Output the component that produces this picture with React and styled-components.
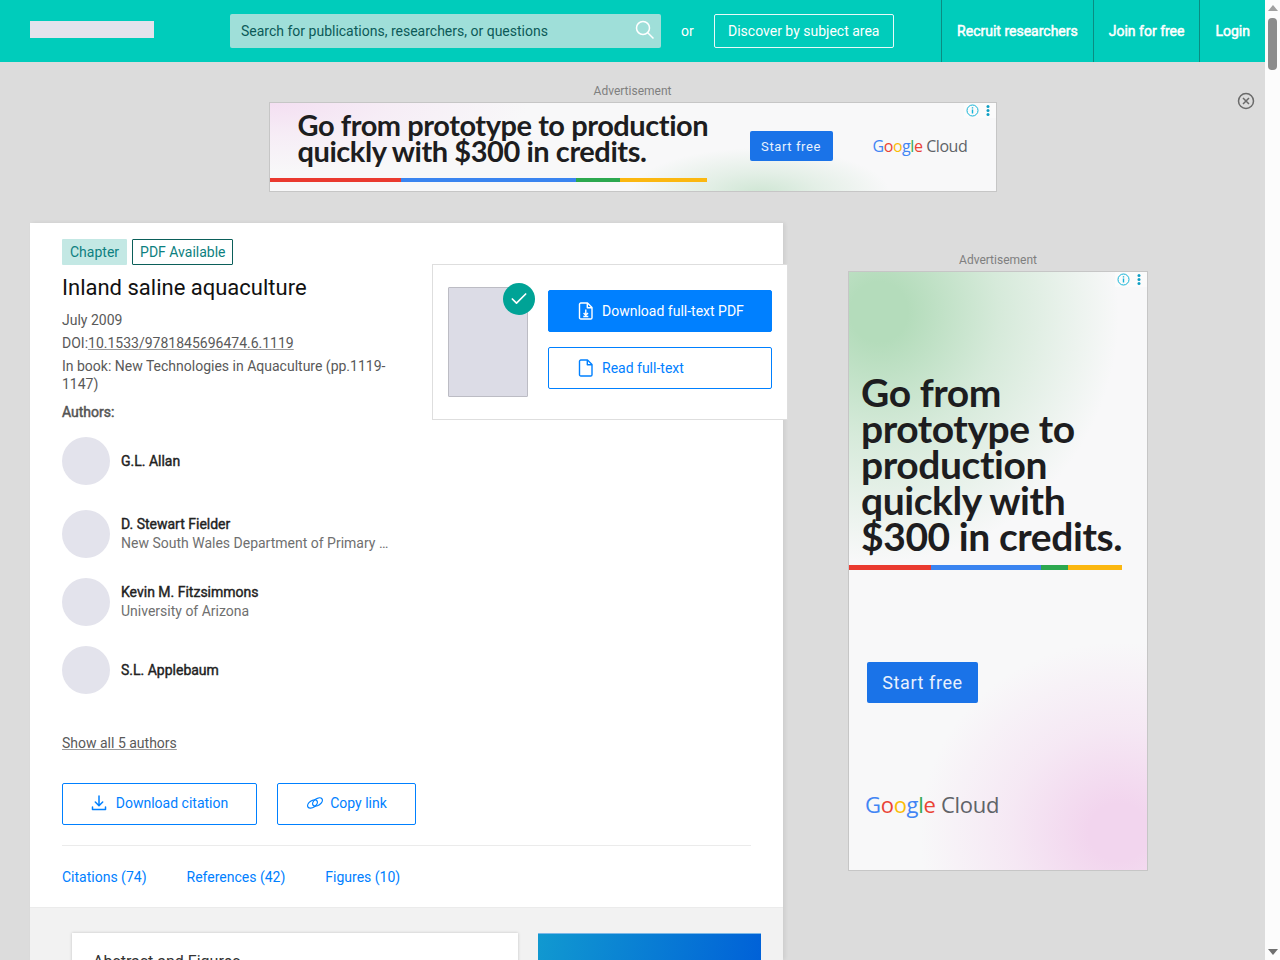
import React from "react";
import styled, { createGlobalStyle } from "styled-components";
import { Check } from "lucide-react";

const Global = createGlobalStyle`
  html, body {
    margin: 0;
    height: 960px;
    overflow: hidden;
    background: #dcdcdc;
    font-family: Roboto, "Liberation Sans", sans-serif;
  }
  * { box-sizing: border-box; }
`;

const Shell = styled.div`
  display: flex;
  width: 1280px;
  height: 960px;
  overflow: hidden;
`;

const Page = styled.div`
  position: relative;
  width: 1265px;
  flex: none;
  background: #dcdcdc;
`;

const Scrollbar = styled.div`
  width: 15px;
  flex: none;
  background: #fcfcfc;
  display: flex;
  flex-direction: column;
  align-items: center;
  justify-content: space-between;
  position: relative;
`;

const ScrollArrow = styled.div`
  width: 0;
  height: 0;
  margin: 5px 0;
  border-left: 5px solid transparent;
  border-right: 5px solid transparent;
  ${(p) => (p.$down ? "border-top: 6px solid #707070;" : "border-bottom: 6px solid #a0a0a0;")}
`;

const ScrollThumb = styled.div`
  position: absolute;
  top: 18px;
  left: 3px;
  width: 9px;
  height: 52px;
  border-radius: 4px;
  background: #8c8c8c;
`;

/* header */
const Header = styled.header`
  height: 62px;
  background: #00ccbb;
  display: flex;
  align-items: stretch;
  padding-left: 30px;
`;

const Logo = styled.div`
  width: 124px;
  height: 17px;
  background: #e3e3ec;
  align-self: center;
  margin: 0 76px 4px 0;
`;

const Search = styled.div`
  width: 431px;
  height: 34px;
  margin-top: 14px;
  background: #9fdfd9;
  border-radius: 2px;
  display: flex;
  align-items: center;
  justify-content: space-between;
  padding: 0 6px 0 11px;
  font-size: 14px;
  color: #0c5a58;
  svg { margin-bottom: 3px; }
`;

const Or = styled.span`
  align-self: center;
  color: #fff;
  font-size: 14px;
  margin: 0 20px;
`;

const Discover = styled.div`
  width: 180px;
  height: 34px;
  margin-top: 14px;
  border: 1px solid #e8faf8;
  border-radius: 2px;
  color: #fff;
  font-size: 14px;
  display: flex;
  align-items: center;
  justify-content: center;
`;

const Nav = styled.nav`
  margin-left: auto;
  display: flex;
`;

const NavItem = styled.a`
  display: flex;
  align-items: center;
  padding: 0 15px;
  border-left: 1px solid #0a8c82;
  color: #fff;
  font-size: 14px;
  -webkit-text-stroke: 0.5px #fff;
`;

/* ads */
const TopAd = styled.section`
  display: flex;
  flex-direction: column;
  align-items: center;
  padding-top: 22px;
  height: 161px;
`;

const AdLabel = styled.div`
  font-size: 12px;
  line-height: 14px;
  height: 18px;
  color: #7f7f7f;
  text-align: center;
`;

const Banner = styled.div`
  position: relative;
  width: 728px;
  height: 90px;
  border: 1px solid #c6c6c6;
  background:
    radial-gradient(ellipse 130px 45px at 490px 90px, #cfe6d4 0%, rgba(207, 230, 212, 0.5) 45%, rgba(207, 230, 212, 0) 100%),
    radial-gradient(ellipse 260px 70px at 0 0, #f4dff2 0%, rgba(244, 223, 242, 0.45) 45%, rgba(244, 223, 242, 0) 100%),
    #f8f8f9;
  display: flex;
  align-items: center;
  padding-bottom: 2px;
`;

const BannerCopy = styled.div`
  width: 450px;
  padding-left: 28px;
  margin-top: -17px;
  font-family: Lato, sans-serif;
  font-weight: 700;
  font-size: 29px;
  line-height: 26px;
  letter-spacing: -0.45px;
  color: #1d1d20;
  white-space: nowrap;
`;

const StartFree = styled.div`
  width: ${(p) => (p.$large ? 111 : 83)}px;
  height: ${(p) => (p.$large ? 41 : 30)}px;
  background: #1a73e8;
  border-radius: 2px;
  color: #e8f1fd;
  font-size: ${(p) => (p.$large ? 18 : 13)}px;
  letter-spacing: 0.6px;
  display: flex;
  align-items: center;
  justify-content: center;
`;

const BannerCta = styled.div`
  margin-left: 30px;
`;

const BannerLogo = styled.div`
  margin-left: 40px;
`;

const GoogleCloud = styled.div`
  font-family: "Open Sans", sans-serif;
  font-size: ${(p) => (p.$large ? 22 : 16)}px;
  letter-spacing: ${(p) => (p.$large ? -0.3 : -0.45)}px;
  color: #5f6368;
  white-space: nowrap;
`;

const Letter = styled.span`
  color: ${(p) => p.$c};
  font-weight: 500;
`;

const AdBadge = styled.div`
  position: absolute;
  top: 0;
  right: 0;
  display: flex;
  align-items: center;
  gap: 5px;
  height: 15px;
  padding: 0 4px 0 2px;
  background: #fbfbfb;
`;

const ColorBar = styled.div`
  position: absolute;
  left: 0;
  display: flex;
  height: ${(p) => p.$height}px;
  bottom: ${(p) => p.$bottom}px;
  width: ${(p) => p.$width}px;
`;

const Seg = styled.div`
  flex: ${(p) => p.$n} 0 0;
  background: ${(p) => p.$c};
`;

const CloseAd = styled.div`
  position: absolute;
  top: 92px;
  right: 10px;
  line-height: 0;
`;

/* main layout */
const Content = styled.div`
  display: flex;
  align-items: flex-start;
  padding-left: 30px;
`;

const Card = styled.main`
  position: relative;
  width: 753px;
  height: 737px;
  flex: none;
  background: #fff;
  box-shadow: 2px 0 4px rgba(0, 0, 0, 0.07);
`;

const Meta = styled.div`
  padding: 16px 32px 0;
  height: 602px;
`;

const Tags = styled.div`
  display: flex;
  gap: 5px;
`;

const Tag = styled.span`
  height: 26px;
  padding: 0 8px;
  display: flex;
  align-items: center;
  font-size: 14px;
  border-radius: 1px;
  color: #0d7f80;
  background: ${(p) => (p.$outlined ? "#fff" : "#c3e8e4")};
  ${(p) => p.$outlined && "border: 1px solid #0b5f5a; padding: 0 6px 0 7px;"}
`;

const Title = styled.h1`
  margin: 8px 0 0;
  font-size: 22px;
  line-height: 30px;
  font-weight: 400;
  color: #111;
`;

const Line = styled.div`
  width: 340px;
  font-size: 14px;
  line-height: 18px;
  color: #595959;
  margin-top: ${(p) => p.$top || 5}px;
  a {
    color: #595959;
    text-decoration: underline;
    text-decoration-color: #999;
  }
`;

const AuthorsLabel = styled.div`
  margin-top: 10px;
  font-size: 14px;
  line-height: 18px;
  -webkit-text-stroke: 0.5px #555;
  color: #555;
`;

const AuthorList = styled.div`
  margin-top: 16px;
  display: flex;
  flex-direction: column;
  gap: 20px;
`;

const Author = styled.div`
  display: flex;
  align-items: center;
  gap: 11px;
  height: 48px;
  ${(p) => p.$first && "margin-bottom: 5px;"}
`;

const Avatar = styled.div`
  width: 48px;
  height: 48px;
  border-radius: 50%;
  background: #e3e3ec;
`;

const AuthorName = styled.div`
  font-size: 14px;
  line-height: 19px;
  -webkit-text-stroke: 0.4px #222;
  color: #222;
`;

const AuthorOrg = styled.div`
  font-size: 14px;
  line-height: 19px;
  color: #6f6f6f;
`;

const ShowAll = styled.a`
  display: block;
  margin-top: 40px;
  font-size: 14px;
  line-height: 18px;
  color: #595959;
  text-decoration: underline;
  text-decoration-color: #999;
`;

const Actions = styled.div`
  display: flex;
  gap: 20px;
  margin-top: 31px;
`;

const OutlineButton = styled.a`
  display: flex;
  align-items: center;
  justify-content: center;
  gap: ${(p) => p.$gap}px;
  height: 42px;
  width: ${(p) => p.$w}px;
  padding-bottom: 2px;
  border: 1px solid #0080ff;
  border-radius: 2px;
  color: #0080ff;
  background: #fff;
  font-size: 14px;
`;

const Divider = styled.div`
  height: 1px;
  margin: 20px 32px 0;
  background: #ebebeb;
`;

const Tabs = styled.div`
  display: flex;
  gap: 40px;
  padding: 22px 32px 0;
  height: 61px;
`;

const TabLink = styled.a`
  font-size: 14px;
  line-height: 18px;
  color: #0080ff;
`;

const Lower = styled.div`
  height: 53px;
  background: #f2f2f2;
  border-top: 1px solid #ebebeb;
  display: flex;
  gap: 20px;
  padding: 25px 22px 0 42px;
  overflow: hidden;
`;

const AbstractCard = styled.div`
  width: 446px;
  height: 60px;
  flex: none;
  background: #fff;
  box-shadow: 0 0 3px rgba(0, 0, 0, 0.2);
  padding: 20px 21px;
  font-size: 16px;
  line-height: 18px;
  color: #333;
`;

const PromoCard = styled.div`
  width: 223px;
  height: 60px;
  flex: none;
  border-top: 1px solid #7cb8e8;
  background: linear-gradient(100deg, #1199d0, #0060d8);
`;

/* floating PDF box, hangs over the card edge */
const PdfBox = styled.aside`
  position: absolute;
  top: 41px;
  left: 402px;
  width: 356px;
  height: 156px;
  background: #fff;
  border: 1px solid #dedede;
  display: flex;
  gap: 20px;
  padding: 22px 15px 0;
`;

const Preview = styled.div`
  position: relative;
  width: 80px;
  height: 110px;
  flex: none;
  background: #dcdce6;
  border: 1px solid #bcbcc4;
  border-radius: 1px;
`;

const CheckBadge = styled.div`
  position: absolute;
  top: -5px;
  right: -8px;
  width: 32px;
  height: 32px;
  border-radius: 50%;
  background: #00a396;
  color: #fff;
  display: flex;
  align-items: center;
  justify-content: center;
`;

const PdfButtons = styled.div`
  flex: 1;
  display: flex;
  flex-direction: column;
  gap: 15px;
  padding-top: 3px;
`;

const PdfButton = styled.a`
  display: flex;
  align-items: center;
  gap: 8px;
  height: 42px;
  padding-left: 29px;
  border: 1px solid #0080ff;
  border-radius: 2px;
  font-size: 14px;
  color: ${(p) => (p.$solid ? "#fff" : "#0080ff")};
  background: ${(p) => (p.$solid ? "#0080ff" : "#fff")};
`;

/* right column */
const Side = styled.aside`
  margin-left: 65px;
  width: 300px;
  padding-top: 30px;
`;

const TallAd = styled.div`
  position: relative;
  width: 300px;
  height: 600px;
  border: 1px solid #c6c6c6;
  background:
    radial-gradient(ellipse 240px 250px at 30px 40px, #b4dcbb 0%, #b4dcbb 12%, rgba(180, 220, 187, 0.5) 50%, rgba(180, 220, 187, 0) 100%),
    radial-gradient(ellipse 200px 190px at 270px 560px, #f2d5ee 0%, #f2d5ee 15%, rgba(242, 213, 238, 0.45) 55%, rgba(242, 213, 238, 0) 100%),
    #f8f8f9;
  padding: 102px 12px 0 18px;
  display: flex;
  flex-direction: column;
  align-items: flex-start;
`;

const TallCopy = styled.div`
  margin-left: -6px;
  font-family: Lato, sans-serif;
  font-weight: 700;
  font-size: 39px;
  line-height: 36px;
  letter-spacing: -0.43px;
  color: #1d1d20;
  white-space: nowrap;
`;

const TallCta = styled.div`
  margin-top: 108px;
`;

const TallLogo = styled.div`
  margin: 86px 0 0 -2px;
`;

const CloudLogo = ({ large }) => (
  <GoogleCloud $large={large}>
    <Letter $c="#4285f4">G</Letter>
    <Letter $c="#ea4335">o</Letter>
    <Letter $c="#fbbc05">o</Letter>
    <Letter $c="#4285f4">g</Letter>
    <Letter $c="#34a853">l</Letter>
    <Letter $c="#ea4335">e</Letter> Cloud
  </GoogleCloud>
);

const Stripe = ({ width, bottom, height }) => (
  <ColorBar $width={width} $bottom={bottom} $height={height}>
    <Seg $n={82} $c="#ea3a30" />
    <Seg $n={109} $c="#3a84f0" />
    <Seg $n={27} $c="#2ca84f" />
    <Seg $n={54} $c="#fbb710" />
  </ColorBar>
);

const InfoDots = () => (
  <AdBadge>
    <svg width="13" height="13" viewBox="0 0 13 13" fill="none" stroke="#14b4d8">
      <circle cx="6.5" cy="6.5" r="5.500" />
      <path d="M6.500 5.500v4M6.500 3.200v1.200" strokeWidth="1.400" />
    </svg>
    <svg width="8" height="13" viewBox="0 0 8 13" fill="#0f9fc4">
      <circle cx="4" cy="2.500" r="1.500" />
      <circle cx="4" cy="6.500" r="1.500" />
      <circle cx="4" cy="10.500" r="1.500" />
    </svg>
  </AdBadge>
);

const FileIcon = ({ arrow }) => (
  <svg width="16" height="18" viewBox="0 0 16 18" fill="none" stroke="currentColor" strokeWidth="1.400" strokeLinejoin="round">
    <path d="M2.800 1h6.700L14 5.500v10.200c0 .7-.6 1.300-1.300 1.300H2.800c-.7 0-1.300-.6-1.300-1.300V2.300C1.500 1.600 2.100 1 2.800 1z" />
    <path d="M9.300 1v4.700H14" />
    {arrow && <path d="M7.800 7.500v5.500M5.600 11l2.200 2.400L10 11M5.300 14.500h5" />}
  </svg>
);

export default function App() {
  return (
    <Shell>
      <Global />
      <Page>
        <Header>
          <Logo />
          <Search>
            <span>Search for publications, researchers, or questions</span>
            <svg width="20" height="20" viewBox="0 0 20 20" fill="none" stroke="#fff" strokeWidth="1.500">
              <circle cx="8" cy="8" r="6.500" />
              <path d="M12.700 12.700L18.500 18.500" />
            </svg>
          </Search>
          <Or>or</Or>
          <Discover>Discover by subject area</Discover>
          <Nav>
            <NavItem>Recruit researchers</NavItem>
            <NavItem>Join for free</NavItem>
            <NavItem>Login</NavItem>
          </Nav>
        </Header>

        <TopAd>
          <AdLabel>Advertisement</AdLabel>
          <Banner>
            <BannerCopy>
              Go from prototype to production
              <br />
              quickly with $300 in credits.
            </BannerCopy>
            <BannerCta>
              <StartFree>Start free</StartFree>
            </BannerCta>
            <BannerLogo>
              <CloudLogo />
            </BannerLogo>
            <Stripe width={437} bottom={9} height={4} />
            <InfoDots />
          </Banner>
        </TopAd>
        <CloseAd>
          <svg width="18" height="18" viewBox="0 0 18 18" fill="none" stroke="#6a6a6a" strokeWidth="1.500">
            <circle cx="9" cy="9" r="7.500" />
            <path d="M6 6l6 6M12 6l-6 6" />
          </svg>
        </CloseAd>

        <Content>
          <Card>
            <Meta>
              <Tags>
                <Tag>Chapter</Tag>
                <Tag $outlined>PDF Available</Tag>
              </Tags>
              <Title>Inland saline aquaculture</Title>
              <Line $top={8}>July 2009</Line>
              <Line>
                DOI:<a>10.1533/9781845696474.6.1119</a>
              </Line>
              <Line>In book: New Technologies in Aquaculture (pp.1119-1147)</Line>
              <AuthorsLabel>Authors:</AuthorsLabel>
              <AuthorList>
                <Author $first>
                  <Avatar />
                  <AuthorName>G.L. Allan</AuthorName>
                </Author>
                <Author>
                  <Avatar />
                  <div>
                    <AuthorName>D. Stewart Fielder</AuthorName>
                    <AuthorOrg>New South Wales Department of Primary …</AuthorOrg>
                  </div>
                </Author>
                <Author>
                  <Avatar />
                  <div>
                    <AuthorName>Kevin M. Fitzsimmons</AuthorName>
                    <AuthorOrg>University of Arizona</AuthorOrg>
                  </div>
                </Author>
                <Author>
                  <Avatar />
                  <AuthorName>S.L. Applebaum</AuthorName>
                </Author>
              </AuthorList>
              <ShowAll>Show all 5 authors</ShowAll>
              <Actions>
                <OutlineButton $w={195} $gap={9}>
                  <svg width="16" height="16" viewBox="0 0 16 16" fill="none" stroke="currentColor" strokeWidth="1.500" strokeLinecap="round" strokeLinejoin="round">
                    <path d="M8 1v9.500M4.300 7L8 10.700 11.700 7M1.500 12v2.500h13V12" />
                  </svg>
                  Download citation
                </OutlineButton>
                <OutlineButton $w={139} $gap={6}>
                  <svg width="18" height="14" viewBox="0 0 18 14" fill="none" stroke="currentColor" strokeWidth="1.300">
                    <ellipse cx="6.500" cy="8" rx="5.500" ry="3.300" transform="rotate(-35 6.500 8)" />
                    <ellipse cx="11.500" cy="6" rx="5.500" ry="3.300" transform="rotate(-35 11.500 6)" />
                  </svg>
                  Copy link
                </OutlineButton>
              </Actions>
            </Meta>
            <Divider />
            <Tabs>
              <TabLink>Citations (74)</TabLink>
              <TabLink>References (42)</TabLink>
              <TabLink>Figures (10)</TabLink>
            </Tabs>
            <Lower>
              <AbstractCard>Abstract and Figures</AbstractCard>
              <PromoCard />
            </Lower>

            <PdfBox>
              <Preview>
                <CheckBadge>
                  <Check size={20} strokeWidth={2} />
                </CheckBadge>
              </Preview>
              <PdfButtons>
                <PdfButton $solid>
                  <FileIcon arrow />
                  Download full-text PDF
                </PdfButton>
                <PdfButton>
                  <FileIcon />
                  Read full-text
                </PdfButton>
              </PdfButtons>
            </PdfBox>
          </Card>

          <Side>
            <AdLabel>Advertisement</AdLabel>
            <TallAd>
              <TallCopy>
                Go from
                <br />
                prototype to
                <br />
                production
                <br />
                quickly with
                <br />
                $300 in credits.
              </TallCopy>
              <Stripe width={273} bottom={300} height={5} />
              <TallCta>
                <StartFree $large>Start free</StartFree>
              </TallCta>
              <TallLogo>
                <CloudLogo large />
              </TallLogo>
              <InfoDots />
            </TallAd>
          </Side>
        </Content>
      </Page>
      <Scrollbar>
        <ScrollArrow />
        <ScrollThumb />
        <ScrollArrow $down />
      </Scrollbar>
    </Shell>
  );
}
